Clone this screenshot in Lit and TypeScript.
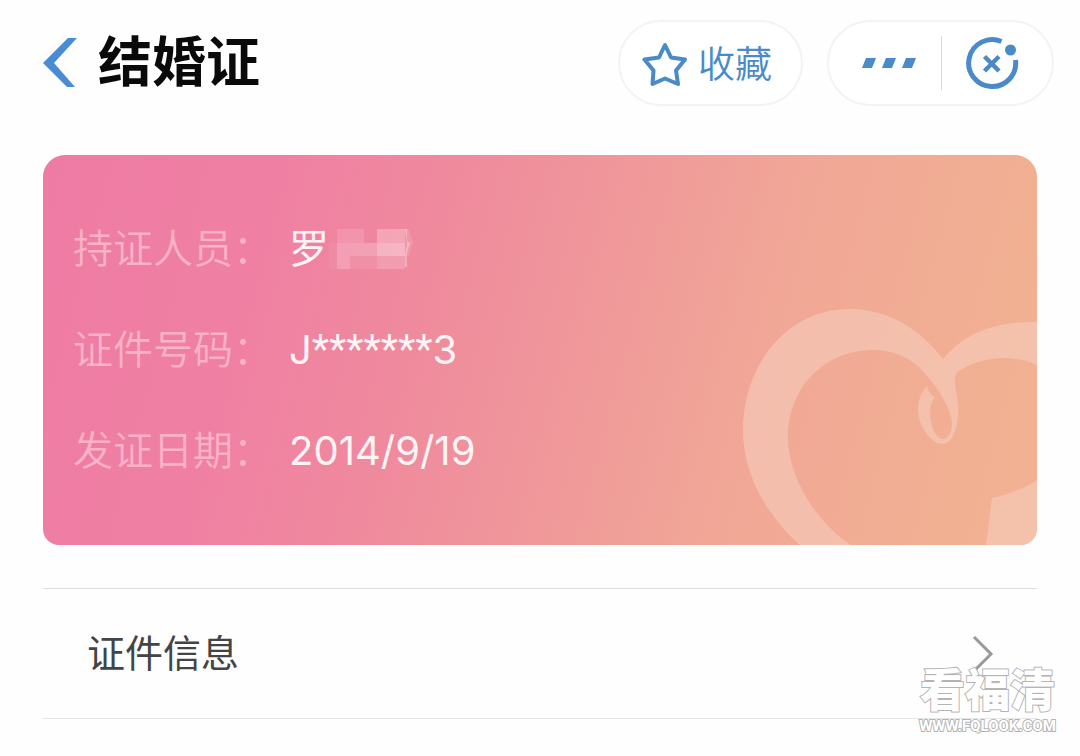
import { LitElement, html, css, svg } from "lit";
import { customElement, property } from "lit/decorators.js";

@customElement("nav-header")
class NavHeader extends LitElement {
  @property() heading = "";

  static styles = css`
    :host {
      display: flex;
      align-items: center;
      padding: 20px 26px 0 43px;
    }
    button {
      font: inherit;
      color: inherit;
      background: none;
      border: 0;
      margin: 0;
      padding: 0;
      cursor: pointer;
    }
    svg {
      display: block;
    }
    .back {
      color: #4a8cd4;
      margin-right: 19px;
    }
    h1 {
      flex: 1;
      margin: 0;
      font-size: 54px;
      line-height: 86px;
      font-weight: 700;
      color: #0a0a0a;
      white-space: nowrap;
    }
    .pill {
      box-sizing: border-box;
      display: flex;
      align-items: center;
      height: 86px;
      border: 2px solid #f5f2f4;
      border-radius: 43px;
      background: #fff;
      color: #4a8ac8;
    }
    .favorite {
      padding: 4px 29px 0 22px;
      gap: 10px;
      font-size: 37px;
      font-weight: 350;
      line-height: 54px;
      margin-right: 24px;
    }
    .more {
      padding: 0 23px 0 33px;
    }
    .close {
      padding: 0 32px 0 24px;
      border-left: 1px solid #d8d8da;
    }
  `;

  render() {
    return html`
      <button class="back" aria-label="返回">
        <svg width="36" height="52" viewBox="0 0 36 52">
          <path d="M25 1H34L11 26L32 50H24L0 26Z" fill="currentColor" />
        </svg>
      </button>
      <h1>${this.heading}</h1>
      <button class="pill favorite">
        <svg width="46" height="46" viewBox="0 0 46 46">
          <path
            d="M23 3L29 15.500L43 17.500L34 28.500L36 42L23 36.500L10.500 42L11.500 28.500L2.500 17.500L17 15.500Z"
            fill="none" stroke="currentColor" stroke-width="4" stroke-linejoin="round"
          />
        </svg>
        收藏
      </button>
      <div class="pill">
        <button class="more" aria-label="更多">
          <svg width="56" height="10" viewBox="0 0 56 10">
            <path d="M4 0H14L10 10H0ZM24 0H34L30 10H20ZM44 0H54L50 10H40Z" fill="currentColor" />
          </svg>
        </button>
        <button class="close" aria-label="关闭">
          <svg width="54" height="54" viewBox="0 0 54 54">
            <g fill="none" stroke="currentColor" stroke-width="5">
              <path d="M35.500 5.500A23.500 23.500 0 1 0 49.500 24" />
              <path d="M18.500 20.500L33 35M33 20.500L18.500 35" stroke-width="4.500" />
            </g>
            <circle cx="44.500" cy="14" r="5.500" fill="currentColor" />
          </svg>
        </button>
      </div>
    `;
  }
}

interface Field {
  label: string;
  value: string;
  masked?: boolean;
}

const mosaic = svg`
  <g fill="#fff">
    <rect x="0" y="14" width="8" height="26" opacity=".05" />
    <rect x="8" y="0" width="27" height="14" opacity=".13" />
    <rect x="8" y="14" width="40" height="13" opacity=".22" />
    <rect x="8" y="27" width="13" height="13" opacity=".22" />
    <rect x="21" y="27" width="27" height="13" opacity=".08" />
    <rect x="48" y="0" width="28" height="14" opacity=".25" />
    <rect x="48" y="14" width="28" height="13" opacity=".38" />
    <rect x="48" y="27" width="28" height="13" opacity=".18" />
    <path d="M76 0H80L84 14L80 27H76Z" opacity=".12" />
    <path d="M76 0H78V12L81 14L78 24V38H76V27L78 14Z" opacity=".3" />
  </g>
`;

@customElement("certificate-card")
class CertificateCard extends LitElement {
  @property({ attribute: false }) fields: Field[] = [];

  static styles = css`
    :host {
      display: block;
      position: relative;
      overflow: hidden;
      padding: 64px 30px;
      border-radius: 22px 22px 16px 16px;
      background: linear-gradient(105deg, #ee7ba4 0%, #f080a3 22%, #ef8a9d 38%, #f0999a 55%, #f1a896 72%, #f2b192 95%);
    }
    .heart {
      position: absolute;
      right: 0;
      bottom: 0;
    }
    dl {
      position: relative;
      display: grid;
      grid-template-columns: 216px 1fr;
      row-gap: 41px;
      margin: 0;
      line-height: 60px;
    }
    dt {
      font-size: 40px;
      font-weight: 350;
      color: #fab2c8;
      white-space: nowrap;
    }
    dd {
      display: flex;
      align-items: center;
      margin: 0;
      font-size: 40px;
      color: #fff4f5;
    }
    .stars {
      font-family: Roboto, sans-serif;
    }
  `;

  private value(text: string) {
    return text
      .split(/(\*+)/)
      .map((part) => (part.startsWith("*") ? html`<span class="stars">${part}</span>` : part));
  }

  render() {
    return html`
      <svg class="heart" width="300" height="240" viewBox="0 0 300 240" aria-hidden="true">
        <g fill="#f5cdbd" fill-opacity=".6">
          <path
            d="M63 240C28 209 6 168 6 125C6 58 52 4 112 4C154 4 184 26 206 54
               C228 28 258 16 300 17V60C276 49 246 51 222 66C216 70 218 78 219 86
               C221 96 222 102 221 112C219 129 213 139 206 139C194 139 181 121 181 105
               C181 94 185 86 190 81C191 86 194 90 198 92C193 98 192 108 194 117
               C196 127 201 134 206 134C212 134 215 126 215 117C213 100 198 79 183 63
               C169 50 153 45 136 45C88 45 51 82 51 132C51 172 78 216 114 240Z"
          />
          <path d="M255 193C270 190 286 184 300 175V240H249Z" />
        </g>
      </svg>
      <dl>
        ${this.fields.map(
          (f) => html`
            <dt>${f.label}：</dt>
            <dd>
              ${this.value(f.value)}${f.masked
                ? html`<svg width="86" height="40" viewBox="0 0 86 40" aria-hidden="true">${mosaic}</svg>`
                : ""}
            </dd>
          `
        )}
      </dl>
    `;
  }
}

@customElement("app-root")
class AppRoot extends LitElement {
  private fields: Field[] = [
    { label: "持证人员", value: "罗", masked: true },
    { label: "证件号码", value: "J*******3" },
    { label: "发证日期", value: "2014/9/19" },
  ];

  static styles = css`
    :host {
      display: block;
      position: relative;
      min-height: 100vh;
      box-sizing: border-box;
      background: #fefefe;
      font-family: Inter, "Noto Sans CJK SC", sans-serif;
    }
    main {
      padding: 49px 43px 37px;
    }
    .row {
      display: flex;
      align-items: center;
      justify-content: space-between;
      margin-top: 43px;
      padding: 0 43px 0 44px;
      border-top: 1px solid #dedede;
      border-bottom: 1px solid #e6e6e6;
      font-size: 38px;
      line-height: 129px;
      color: #444;
      text-decoration: none;
    }
    .watermark {
      position: absolute;
      right: 24px;
      top: 664px;
      color: #fff;
      font-weight: 700;
      text-align: center;
      white-space: nowrap;
      paint-order: stroke fill;
      -webkit-text-stroke: 2px #b4b4b4;
    }
    .site {
      font-size: 45px;
      line-height: 54px;
      font-weight: 900;
    }
    .address {
      font-family: Roboto, sans-serif;
      font-size: 15px;
      line-height: 16px;
    }
  `;

  render() {
    return html`
      <nav-header heading="结婚证"></nav-header>
      <main>
        <certificate-card .fields=${this.fields}></certificate-card>
        <a class="row" href="#info">
          证件信息
          <svg width="22" height="38" viewBox="0 0 22 38" aria-hidden="true">
            <path d="M2 2L19 19L2 36" fill="none" stroke="#999" stroke-width="3" />
          </svg>
        </a>
      </main>
      <div class="watermark">
        <div class="site">看福清</div>
        <div class="address">WWW.FQLOOK.COM</div>
      </div>
    `;
  }
}
